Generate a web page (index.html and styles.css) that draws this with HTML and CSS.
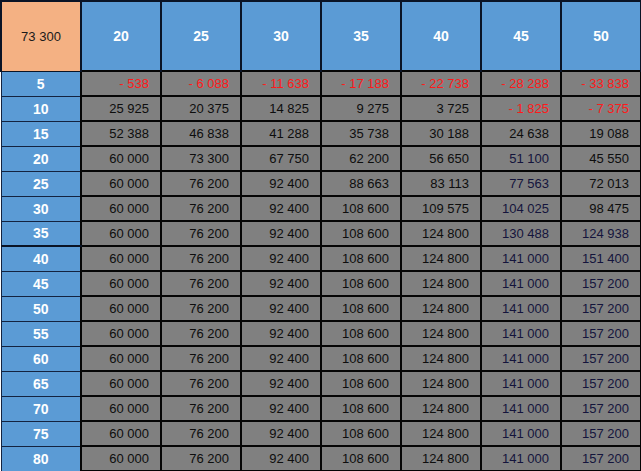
FILE: index.html
```html
<!DOCTYPE html>
<html>
<head>
<meta charset="utf-8">
<link rel="stylesheet" href="styles.css">
</head>
<body>
<table class="grid">
<colgroup><col class="c"><col class="c"><col class="c"><col class="c"><col class="c"><col class="c"><col class="c"><col class="c"></colgroup>
<thead>
<tr class="head"><th class="corner">73 300</th><th>20</th><th>25</th><th>30</th><th>35</th><th>40</th><th>45</th><th>50</th></tr>
</thead>
<tbody>
<tr><th>5</th><td class="neg">- 538</td><td class="neg">- 6 088</td><td class="neg">- 11 638</td><td class="neg">- 17 188</td><td class="neg">- 22 738</td><td class="neg">- 28 288</td><td class="neg">- 33 838</td></tr>
<tr><th>10</th><td>25 925</td><td>20 375</td><td>14 825</td><td>9 275</td><td>3 725</td><td class="neg">- 1 825</td><td class="neg">- 7 375</td></tr>
<tr><th>15</th><td>52 388</td><td>46 838</td><td>41 288</td><td>35 738</td><td>30 188</td><td>24 638</td><td>19 088</td></tr>
<tr><th>20</th><td>60 000</td><td>73 300</td><td>67 750</td><td>62 200</td><td>56 650</td><td class="bl">51 100</td><td>45 550</td></tr>
<tr><th>25</th><td>60 000</td><td>76 200</td><td>92 400</td><td>88 663</td><td>83 113</td><td class="bl">77 563</td><td>72 013</td></tr>
<tr><th>30</th><td>60 000</td><td>76 200</td><td>92 400</td><td>108 600</td><td>109 575</td><td class="bl">104 025</td><td>98 475</td></tr>
<tr class="thick"><th>35</th><td>60 000</td><td>76 200</td><td>92 400</td><td>108 600</td><td>124 800</td><td class="bl">130 488</td><td class="bl">124 938</td></tr>
<tr><th>40</th><td>60 000</td><td>76 200</td><td>92 400</td><td>108 600</td><td>124 800</td><td class="bl">141 000</td><td class="bl">151 400</td></tr>
<tr><th>45</th><td>60 000</td><td>76 200</td><td>92 400</td><td>108 600</td><td>124 800</td><td class="bl">141 000</td><td class="bl">157 200</td></tr>
<tr><th>50</th><td>60 000</td><td>76 200</td><td>92 400</td><td>108 600</td><td>124 800</td><td class="bl">141 000</td><td class="bl">157 200</td></tr>
<tr><th>55</th><td>60 000</td><td>76 200</td><td>92 400</td><td>108 600</td><td>124 800</td><td class="bl">141 000</td><td class="bl">157 200</td></tr>
<tr><th>60</th><td>60 000</td><td>76 200</td><td>92 400</td><td>108 600</td><td>124 800</td><td class="bl">141 000</td><td class="bl">157 200</td></tr>
<tr><th>65</th><td>60 000</td><td>76 200</td><td>92 400</td><td>108 600</td><td>124 800</td><td class="bl">141 000</td><td class="bl">157 200</td></tr>
<tr><th>70</th><td>60 000</td><td>76 200</td><td>92 400</td><td>108 600</td><td>124 800</td><td class="bl">141 000</td><td class="bl">157 200</td></tr>
<tr><th>75</th><td>60 000</td><td>76 200</td><td>92 400</td><td>108 600</td><td>124 800</td><td class="bl">141 000</td><td class="bl">157 200</td></tr>
<tr><th>80</th><td>60 000</td><td>76 200</td><td>92 400</td><td>108 600</td><td>124 800</td><td class="bl">141 000</td><td class="bl">157 200</td></tr>
</tbody>
</table>
</body>
</html>
```
FILE: styles.css
```css
html, body {
  margin: 0;
  padding: 0;
  background: #ffffff;
}
.grid {
  border-collapse: collapse;
  table-layout: fixed;
  width: 640px;
  font-family: "Liberation Sans", Arial, sans-serif;
  font-size: 13px;
}
.grid .c {
  width: 80px;
}
.grid th, .grid td {
  padding: 0;
  box-sizing: border-box;
}
.grid thead th {
  height: 70px;
  background: #5b9bd5;
  color: #ffffff;
  font-weight: bold;
  font-size: 14px;
  text-align: center;
  border: 2px solid #0a1426;
  border-bottom-width: 1px;
}
.grid thead th.corner {
  background: #f4b183;
  color: #1a1a1a;
  font-weight: normal;
  font-size: 13px;
  border-right-width: 1px;
}
.grid tbody th {
  height: 25px;
  background: #5b9bd5;
  color: #ffffff;
  font-weight: bold;
  font-size: 14px;
  text-align: center;
  border: 1px solid #14233f;
}
.grid tbody td {
  height: 25px;
  background: #808080;
  color: #0d0d0d;
  text-align: right;
  padding-right: 11px;
  border: 2px solid #050505;
}
.grid tbody td.neg {
  color: #ff1a1a;
}
.grid tbody td.bl {
  color: #14143c;
}
.grid tbody tr.thick th {
  border-bottom: 2px solid #0a1426;
}
```
